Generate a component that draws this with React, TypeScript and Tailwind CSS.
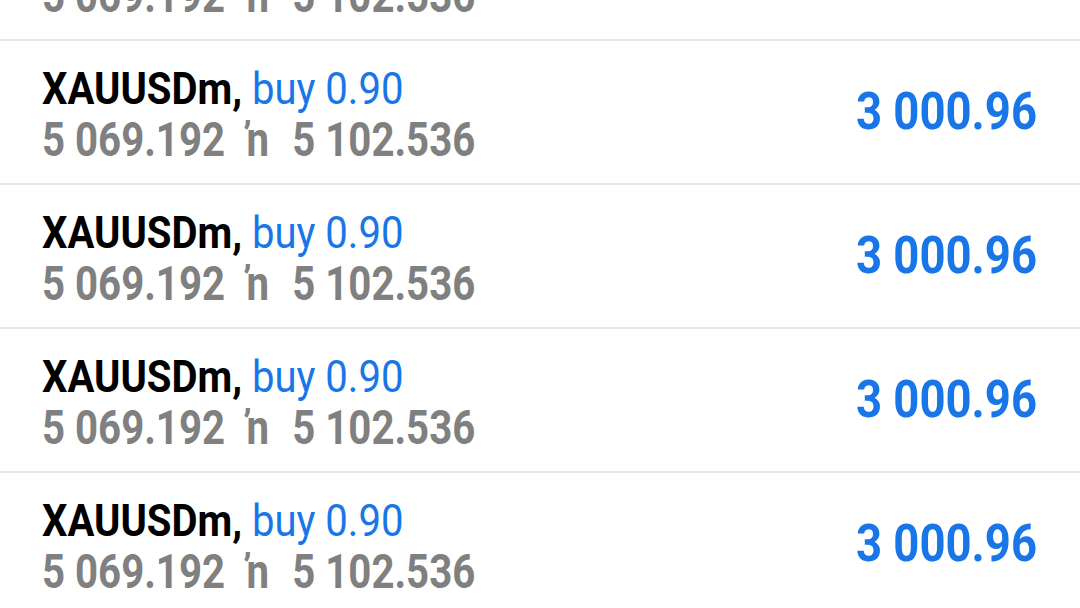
import React from "react";

const rows = [0, 1, 2, 3, 4];

function Row() {
  return (
    <div className="flex h-[144px] items-start justify-between border-b-2 border-[#e8e8e8] pl-[42px] pr-[43px]">
      <div className="flex flex-col pt-[22px]">
        <div className="origin-left scale-x-[0.91] whitespace-pre text-[44px] leading-[52px]">
          <span className="font-bold text-black">XAUUSDm,</span>
          <span className="text-[#1976e8]"> buy 0.90</span>
        </div>
        <div className="origin-left scale-x-[0.82] whitespace-pre text-[49px] font-bold leading-[50px] text-[#808080]">
          <span>5 069.192 </span>
          <span className="ml-[14px]">ŉ</span>
          <span className="ml-[4px]">{"  5 102.536"}</span>
        </div>
      </div>
      <div className="flex h-full items-center">
        <div className="origin-right scale-x-[0.875] whitespace-pre text-[52px] font-bold leading-[52px] text-[#1976e8]">
          3 000.96
        </div>
      </div>
    </div>
  );
}

export default function App() {
  return (
    <div
      className="h-[608px] w-[1080px] overflow-hidden bg-white"
      style={{ fontFamily: "Roboto, 'Liberation Sans', sans-serif" }}
    >
      <div className="-mt-[103px]">
        {rows.map((r) => (
          <Row key={r} />
        ))}
      </div>
    </div>
  );
}
